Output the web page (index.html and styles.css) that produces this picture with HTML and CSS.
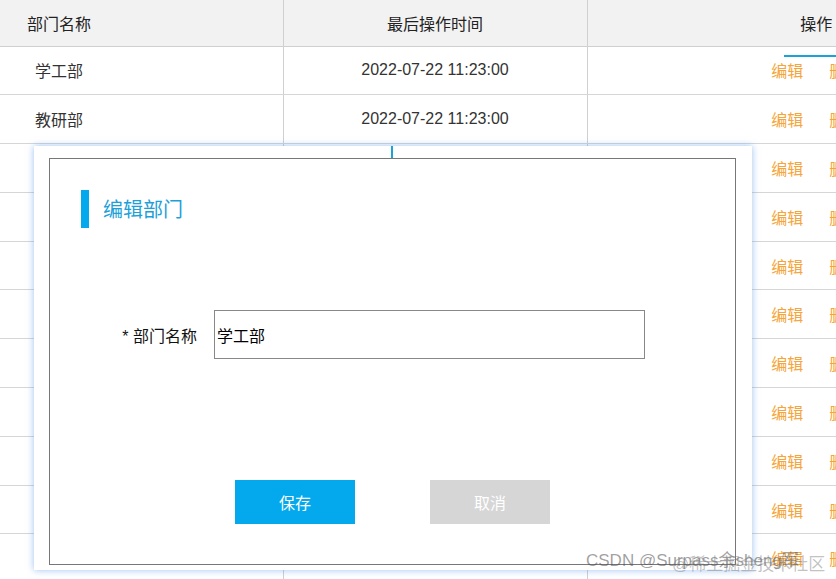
FILE: index.html
```html
<!DOCTYPE html>
<html lang="zh-CN">
<head>
    <meta charset="UTF-8">
    <meta name="viewport" content="width=device-width, initial-scale=1.0">
    <title>部门管理</title>
    <link rel="stylesheet" href="styles.css">
</head>
<body>
    <div class="page">
        <table class="dept-table">
            <thead>
                <tr>
                    <th class="col-name">部门名称</th>
                    <th class="col-time">最后操作时间</th>
                    <th class="col-op">操作</th>
                </tr>
            </thead>
            <tbody id="deptBody"></tbody>
        </table>
        <div class="focus-line"></div>

        <div class="modal">
            <div class="modal-tick"></div>
            <div class="modal-inner">
                <h2 class="modal-title">编辑部门</h2>
                <div class="form-row">
                    <label class="form-label" for="deptName">* 部门名称</label>
                    <input type="text" id="deptName" class="form-input" value="学工部">
                </div>
                <div class="btn-row">
                    <button class="btn btn-save">保存</button>
                    <button class="btn btn-cancel">取消</button>
                </div>
            </div>
        </div>

        <div class="watermark">
            <span class="wm-a">CSDN @Surpass余sheng军</span>
            <span class="wm-b">@稀土掘金技术社区</span>
        </div>
    </div>
    <script>
        const depts = ['学工部', '教研部', '就业部', '人事部', '行政部', '财务部', '后勤部', '宣传部', '招生部', '信息部', '保卫部'];
        const body = document.getElementById('deptBody');

        depts.forEach((name) => {
            const row = document.createElement('tr');
            row.innerHTML = `
                <td class="col-name">${name}</td>
                <td class="col-time">2022-07-22 11:23:00</td>
                <td class="col-op"><a class="op-edit">编辑</a><a class="op-del">删除</a></td>
            `;
            body.appendChild(row);
        });
    </script>
</body>
</html>
```

FILE: styles.css
```css
/* General */
body {
    margin: 0;
    background: #fff;
    font-family: "Liberation Sans", "Noto Sans CJK SC", sans-serif;
    color: #333;
    overflow: hidden;
}

.page {
    position: relative;
    width: 836px;
    height: 579px;
    overflow: hidden;
}

/* Table */
.dept-table {
    width: 1045px;
    border-collapse: collapse;
    table-layout: fixed;
    font-size: 16px;
}

.dept-table th {
    height: 46px;
    padding: 0;
    background: #f2f2f2;
    font-weight: normal;
    color: #222;
    border-bottom: 1px solid #d0d0d0;
    box-sizing: border-box;
}

.dept-table td {
    height: 48.8px;
    padding: 0;
    border-bottom: 1px solid #d6d6d6;
    box-sizing: border-box;
}

.col-name {
    width: 283px;
    text-align: left;
    border-right: 1px solid #d0d0d0;
}

th.col-name {
    padding-left: 27px !important;
}

td.col-name {
    padding-left: 35px !important;
}

.col-time {
    width: 304px;
    text-align: center;
    border-right: 1px solid #d0d0d0;
}

.col-op {
    text-align: center;
}

.op-edit, .op-del {
    color: #f5a53a;
    cursor: pointer;
}

.op-del {
    margin-left: 26px;
}

.focus-line {
    position: absolute;
    left: 784px;
    top: 55px;
    width: 60px;
    height: 2px;
    background: #1aa3d6;
}

/* Modal */
.modal {
    position: absolute;
    left: 34px;
    top: 146px;
    width: 718px;
    height: 424px;
    box-sizing: border-box;
    padding: 12px 16px 5px 15px;
    background: #fff;
    box-shadow: 0 0 7px rgba(70, 140, 235, 0.55);
}

.modal-tick {
    position: absolute;
    left: 357px;
    top: 0;
    width: 2px;
    height: 12px;
    background: #1aa3d6;
}

.modal-inner {
    height: 100%;
    box-sizing: border-box;
    border: 1px solid #777;
    padding-top: 31px;
}

.modal-title {
    margin: 0 0 0 31px;
    height: 38px;
    border-left: 8px solid #03a9ec;
    padding-left: 14px;
    font-size: 20px;
    font-weight: normal;
    line-height: 40px;
    color: #1e9fd8;
}

.form-row {
    display: flex;
    align-items: center;
    margin-top: 82px;
}

.form-label {
    width: 147px;
    padding-right: 17px;
    text-align: right;
    font-size: 16px;
    color: #111;
}

.form-input {
    width: 431px;
    height: 49px;
    box-sizing: border-box;
    border: 1px solid #888;
    padding: 0 2px;
    font-family: "Liberation Sans", "Noto Sans CJK SC", sans-serif;
    font-size: 16px;
    color: #000;
    outline: none;
}

.btn-row {
    display: flex;
    gap: 75px;
    margin: 121px 0 0 185px;
}

.btn {
    width: 120px;
    height: 44px;
    border: none;
    color: #fff;
    font-family: "Liberation Sans", "Noto Sans CJK SC", sans-serif;
    font-size: 16px;
    cursor: pointer;
}

.btn-save {
    background: #03a9ec;
}

.btn-cancel {
    background: #d6d6d6;
}

/* Watermark */
.watermark {
    position: absolute;
    left: 586px;
    top: 546px;
    width: 250px;
    height: 33px;
    font-size: 17px;
    color: rgba(80, 80, 80, 0.55);
    pointer-events: none;
}

.wm-a {
    position: absolute;
    left: 0;
    top: 0;
    white-space: nowrap;
}

.wm-b {
    position: absolute;
    left: 86px;
    top: 4px;
    white-space: nowrap;
    color: rgba(120, 120, 120, 0.45);
}
```
